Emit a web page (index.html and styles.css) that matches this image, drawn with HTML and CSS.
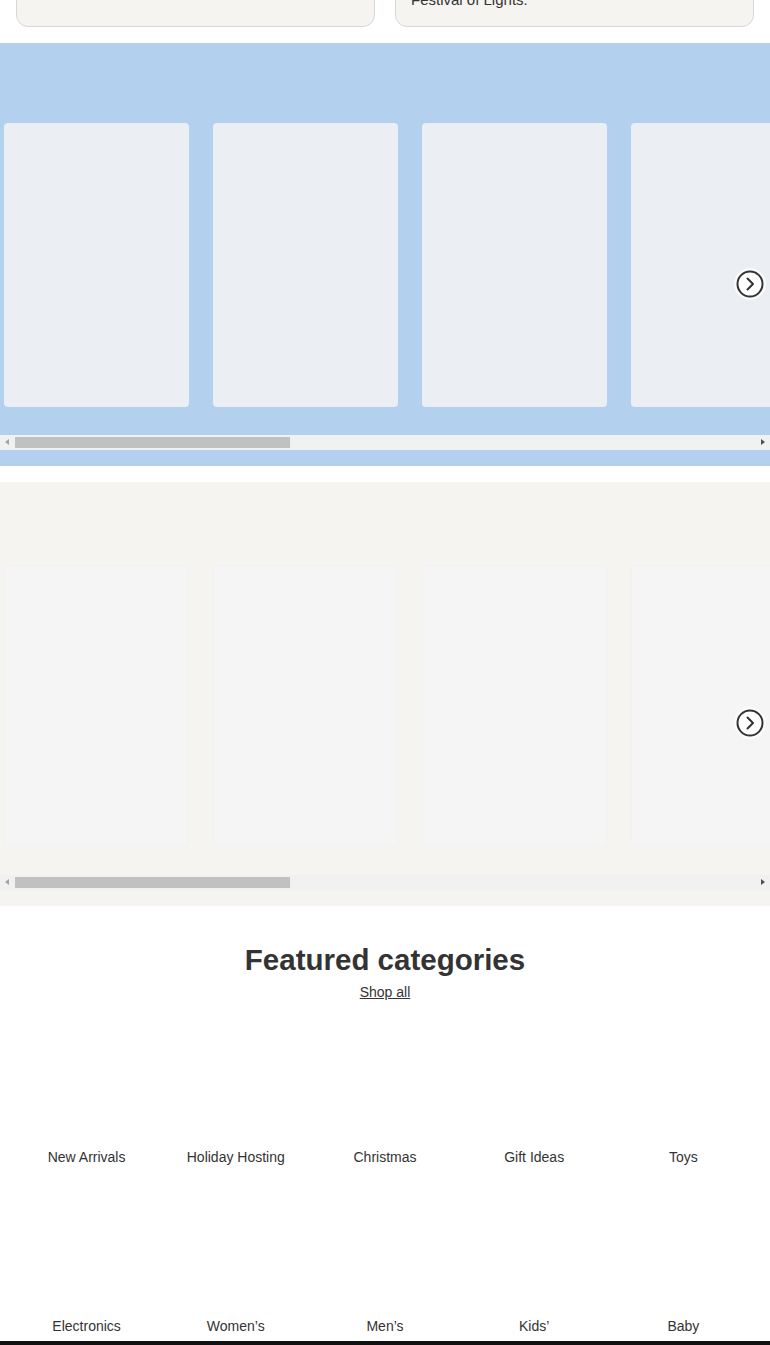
FILE: index.html
```html
<!DOCTYPE html>
<html lang="en">
<head>
<meta charset="utf-8">
<title>Holiday shop</title>
<link rel="stylesheet" href="styles.css">
</head>
<body>
<div class="promos">
  <div class="promo">
    <h3 class="promo-title">Christmas</h3>
    <p class="promo-text">Deck the halls with festive finds.</p>
  </div>
  <div class="promo">
    <h3 class="promo-title">Hanukkah</h3>
    <p class="promo-text"><span class="line">Celebrate with everything for the</span><span class="line">Festival of Lights.</span></p>
  </div>
</div>

<section class="carousel carousel-blue">
  <div class="track">
    <div class="tile"></div><div class="tile"></div><div class="tile"></div><div class="tile"></div><div class="tile"></div>
    <div class="tile"></div><div class="tile"></div><div class="tile"></div><div class="tile"></div><div class="tile"></div>
  </div>
  <div class="scrollbar">
    <span class="sb-arrow sb-left"></span>
    <div class="sb-track"><div class="sb-thumb"></div></div>
    <span class="sb-arrow sb-right"></span>
  </div>
  <button class="next" aria-label="Next">
    <svg width="28" height="28" viewBox="0 0 28 28"><circle cx="14" cy="14" r="12.5" fill="#fff" stroke="#333" stroke-width="2"/><path d="M11.5 8.5 L17 14 L11.5 19.5" fill="none" stroke="#333" stroke-width="2" stroke-linecap="round" stroke-linejoin="round"/></svg>
  </button>
</section>

<section class="carousel carousel-beige">
  <div class="track">
    <div class="tile"></div><div class="tile"></div><div class="tile"></div><div class="tile"></div><div class="tile"></div>
    <div class="tile"></div><div class="tile"></div><div class="tile"></div><div class="tile"></div><div class="tile"></div>
  </div>
  <div class="scrollbar">
    <span class="sb-arrow sb-left"></span>
    <div class="sb-track"><div class="sb-thumb"></div></div>
    <span class="sb-arrow sb-right"></span>
  </div>
  <button class="next" aria-label="Next">
    <svg width="28" height="28" viewBox="0 0 28 28"><circle cx="14" cy="14" r="12.5" fill="#fff" stroke="#333" stroke-width="2"/><path d="M11.5 8.5 L17 14 L11.5 19.5" fill="none" stroke="#333" stroke-width="2" stroke-linecap="round" stroke-linejoin="round"/></svg>
  </button>
</section>

<section class="featured">
  <h2 class="featured-title">Featured categories</h2>
  <a class="shop-all" href="#">Shop all</a>
  <div class="cat-grid">
    <a class="cat" href="#"><span class="cat-img"></span><span class="cat-label">New Arrivals</span></a>
    <a class="cat" href="#"><span class="cat-img"></span><span class="cat-label">Holiday Hosting</span></a>
    <a class="cat" href="#"><span class="cat-img"></span><span class="cat-label">Christmas</span></a>
    <a class="cat" href="#"><span class="cat-img"></span><span class="cat-label">Gift Ideas</span></a>
    <a class="cat" href="#"><span class="cat-img"></span><span class="cat-label">Toys</span></a>
    <a class="cat" href="#"><span class="cat-img"></span><span class="cat-label">Electronics</span></a>
    <a class="cat" href="#"><span class="cat-img"></span><span class="cat-label">Women’s</span></a>
    <a class="cat" href="#"><span class="cat-img"></span><span class="cat-label">Men’s</span></a>
    <a class="cat" href="#"><span class="cat-img"></span><span class="cat-label">Kids’</span></a>
    <a class="cat" href="#"><span class="cat-img"></span><span class="cat-label">Baby</span></a>
  </div>
</section>
<div class="footer-bar"></div>
</body>
</html>
```

FILE: styles.css
```css
* { box-sizing: border-box; }
html, body { margin: 0; padding: 0; background: #fff; }
body {
  font-family: "Liberation Sans", Arial, Helvetica, sans-serif;
  color: #333;
  overflow: hidden;
}

/* promo cards (partially scrolled off) */
.promos {
  display: grid;
  grid-template-columns: 1fr 1fr;
  gap: 20px;
  padding: 0 16px;
  margin-top: -72px;
  margin-bottom: 16px;
}
.promo {
  height: 99px;
  background: #f5f4f1;
  border: 1px solid #d8d7d3;
  border-radius: 12px;
  padding: 19px 15px 16px;
}
.promo-title { margin: 0; font-size: 17px; line-height: 22px; font-weight: 700; }
.promo-text { margin: 0; font-size: 15px; line-height: 20px; }
.line { display: block; }

/* carousels */
.carousel { position: relative; }
.carousel-blue { background: #b3d0ee; padding: 80px 0 16px; }
.carousel-beige { background: #f5f4f1; padding: 83px 0 16px; margin-top: 16px; }
.track {
  display: flex;
  gap: 24px;
  padding-left: 4px;
  overflow: hidden;
}
.tile { flex: 0 0 185px; height: 284px; border-radius: 4px; }
.carousel-blue .tile { background: #ebeef3; }
.carousel-beige .tile {
  height: 282px;
  background: #f5f5f5;
  border-radius: 2px;
  border: 1px solid #f2f2ef;
}

.scrollbar {
  display: flex;
  align-items: center;
  height: 15px;
  margin-top: 28px;
  background: #f1f1f1;
}
.sb-arrow { flex: 0 0 15px; height: 15px; position: relative; }
.sb-arrow::after {
  content: "";
  position: absolute;
  top: 4px;
  width: 0; height: 0;
  border-top: 3.5px solid transparent;
  border-bottom: 3.5px solid transparent;
}
.sb-left::after { left: 5px; border-right: 4px solid #a3a3a3; }
.sb-right::after { left: 6px; border-left: 4px solid #505050; }
.sb-track { flex: 1; height: 15px; padding: 2px 0; }
.sb-thumb { width: 275px; height: 11px; background: #c1c1c1; }

.next {
  position: absolute;
  right: 4px;
  top: 225px;
  width: 32px;
  height: 32px;
  padding: 0;
  border: 0;
  border-radius: 50%;
  background: rgba(255, 255, 255, 0.7);
  display: flex;
  align-items: center;
  justify-content: center;
}

/* featured categories */
.featured { padding-top: 36px; text-align: center; }
.featured-title {
  margin: 0;
  font-size: 29.5px;
  line-height: 36px;
  font-weight: 700;
  color: #333;
}
.shop-all {
  display: inline-block;
  margin-top: 4px;
  font-size: 14px;
  line-height: 20px;
  color: #333;
  text-decoration: underline;
}
.cat-grid {
  display: grid;
  grid-template-columns: repeat(5, 1fr);
  row-gap: 11px;
  padding: 0 12px;
  margin-top: 7px;
}
.cat {
  display: flex;
  flex-direction: column;
  align-items: center;
  gap: 8px;
  color: #333;
  text-decoration: none;
}
.cat-img { display: block; width: 130px; height: 130px; background: #fff; }
.cat-label { font-size: 14px; line-height: 20px; }

.footer-bar { height: 40px; margin-top: 5px; background: #111; }
```
